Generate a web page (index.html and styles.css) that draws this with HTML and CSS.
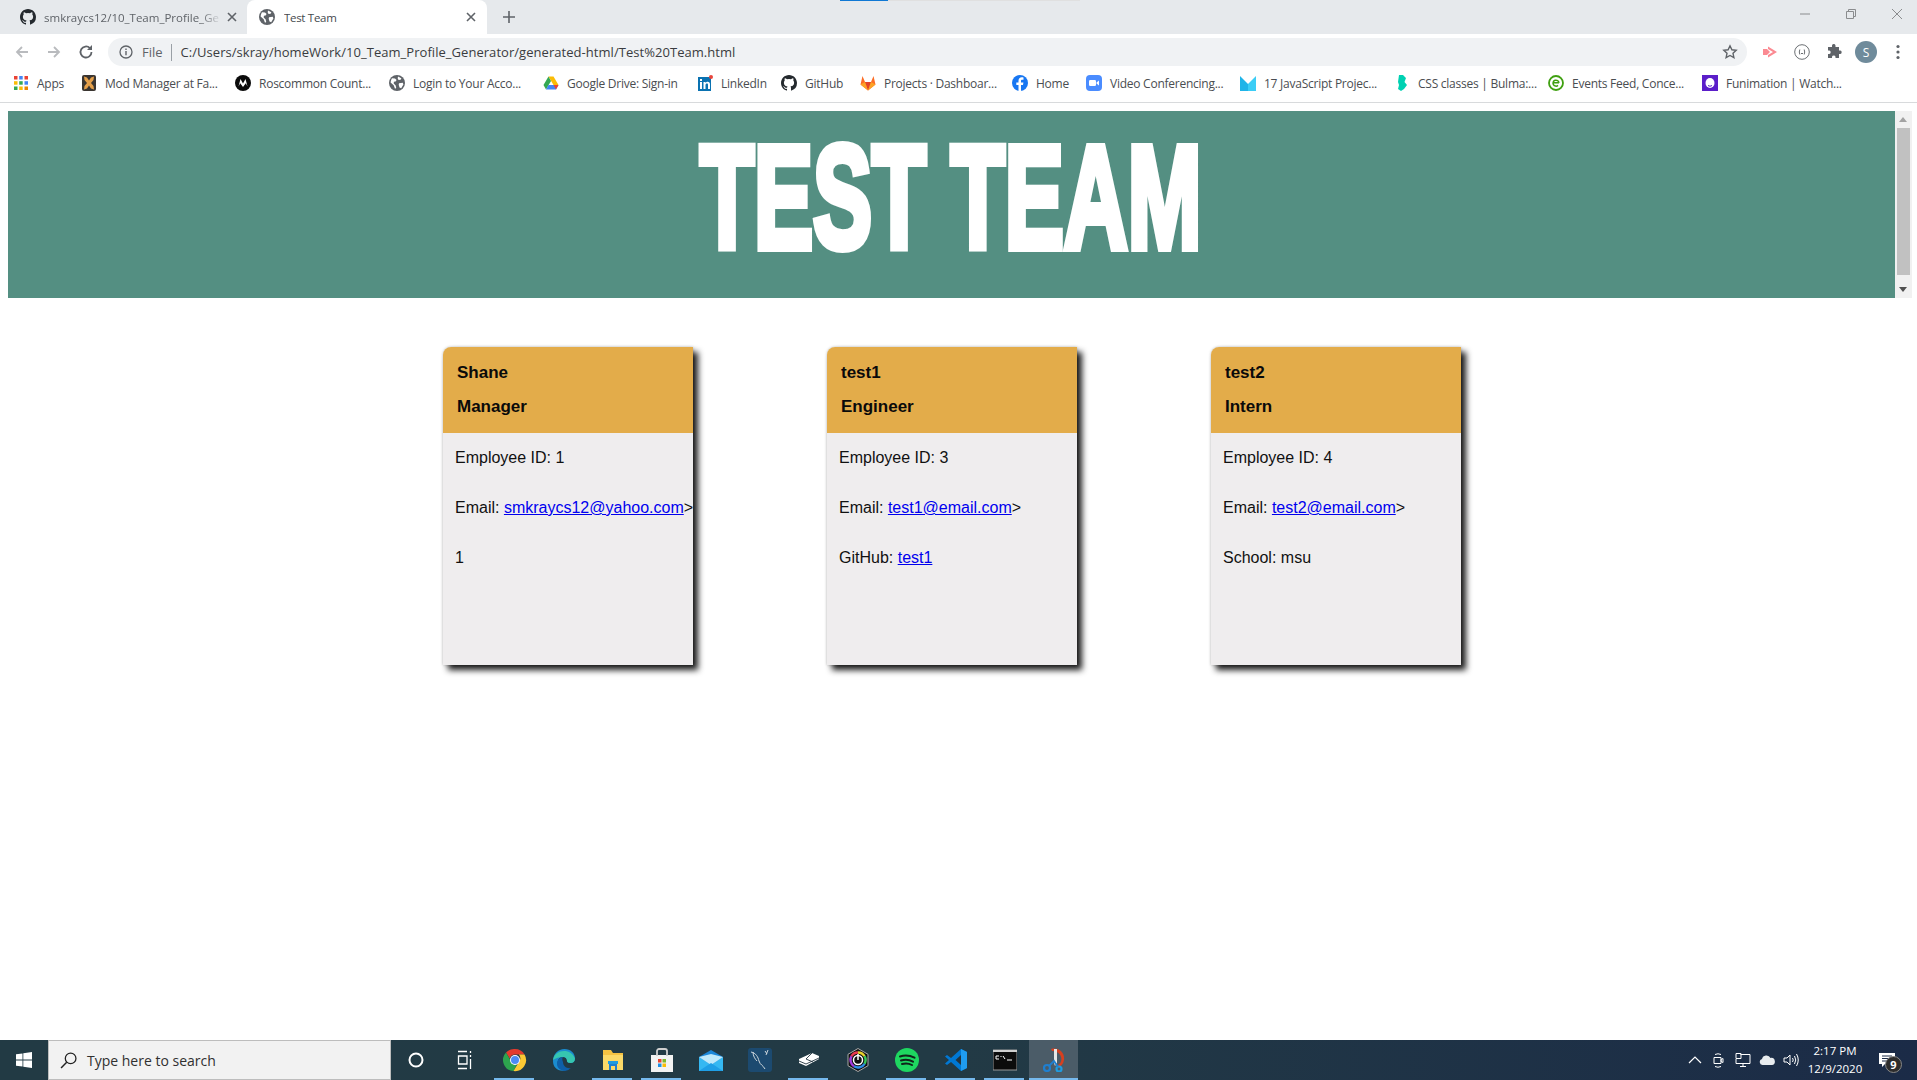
FILE: index.html
```html
<!DOCTYPE html>
<html lang="en">
<head>
<meta charset="utf-8">
<title>Test Team</title>
<link rel="stylesheet" href="styles.css">
</head>
<body>
<div class="window">
  <div class="tabstrip">
    <div class="tab tab-inactive">
      <svg class="ico16" viewBox="0 0 16 16"><path fill="#24292e" d="M8 0C3.58 0 0 3.58 0 8c0 3.54 2.29 6.53 5.47 7.59.4.07.55-.17.55-.38v-1.34c-2.23.48-2.7-1.07-2.7-1.07-.36-.92-.89-1.17-.89-1.17-.73-.5.05-.49.05-.49.8.06 1.23.83 1.23.83.71 1.22 1.87.87 2.33.66.07-.52.28-.87.51-1.07-1.78-.2-3.64-.89-3.64-3.95 0-.87.31-1.59.82-2.15-.08-.2-.36-1.02.08-2.12 0 0 .67-.21 2.2.82a7.6 7.6 0 0 1 4 0c1.53-1.04 2.2-.82 2.2-.82.44 1.1.16 1.92.08 2.12.51.56.82 1.27.82 2.15 0 3.07-1.87 3.75-3.65 3.95.29.25.54.73.54 1.48v2.2c0 .21.15.46.55.38A8 8 0 0 0 16 8c0-4.42-3.58-8-8-8z"/></svg>
      <span class="tab-title tab-title-fade">smkraycs12/10_Team_Profile_Ge</span>
      <svg class="tab-x" viewBox="0 0 10 10"><path d="M1 1l8 8M9 1l-8 8" stroke="#5f6368" stroke-width="1.6"/></svg>
    </div>
    <div class="tab tab-active">
      <svg class="ico16" viewBox="0 0 16 16"><circle cx="8" cy="8" r="8" fill="#5f6368"/><path fill="#fff" d="M3 3.200l3 .3 1.600 1.600-1 1.500-1.700.2-.2 1.600 2 2 .5 2.500-1.200.8-1.300-3.500L1.600 7.600C1.800 5.900 2.200 4.300 3 3.200zM9 1.600l3.400 1.600-.8 1.600-2 .2-.9-1.500zM10 8.200l3.800-.4.6 1.800-2.200 3.600-1.700-.6-.8-2.800z"/></svg>
      <span class="tab-title">Test Team</span>
      <svg class="tab-x" viewBox="0 0 10 10"><path d="M1 1l8 8M9 1l-8 8" stroke="#5f6368" stroke-width="1.6"/></svg>
    </div>
    <svg class="new-tab" viewBox="0 0 12 12"><path d="M6 0v12M0 6h12" stroke="#5f6368" stroke-width="1.6"/></svg>
    <div class="strip-fill"><div class="strip-blue"></div><div class="strip-grey"></div></div>
    <div class="winctl">
      <svg class="winbtn" viewBox="0 0 12 12"><path d="M1 6h10" stroke="#8a8c8e"/></svg>
      <svg class="winbtn" viewBox="0 0 12 12"><path d="M1.500 3.500h7v7h-7zM3.500 3.500v-2h7v7h-2" fill="none" stroke="#8a8c8e"/></svg>
      <svg class="winbtn" viewBox="0 0 12 12"><path d="M1 1l10 10M11 1L1 11" stroke="#8a8c8e"/></svg>
    </div>
  </div>

  <div class="toolbar">
    <svg class="nav" viewBox="0 0 16 16"><path d="M14 8H3M8 3L3 8l5 5" fill="none" stroke="#b9bbbe" stroke-width="1.800"/></svg>
    <svg class="nav" viewBox="0 0 16 16"><path d="M2 8h11M8 3l5 5-5 5" fill="none" stroke="#b9bbbe" stroke-width="1.800"/></svg>
    <svg class="nav" viewBox="0 0 16 16"><path d="M13.500 8a5.500 5.500 0 1 1-1.600-3.900" fill="none" stroke="#5f6368" stroke-width="1.800"/><path d="M14 1v5H9z" fill="#5f6368"/></svg>
    <div class="omnibox">
      <svg class="ico14" viewBox="0 0 14 14"><circle cx="7" cy="7" r="6" fill="none" stroke="#5f6368" stroke-width="1.300"/><path d="M7 6v4.200M7 3.500v1.400" stroke="#5f6368" stroke-width="1.400"/></svg>
      <span class="scheme">File</span>
      <span class="omni-sep"></span>
      <span class="url">C:/Users/skray/homeWork/10_Team_Profile_Generator/generated-html/Test%20Team.html</span>
      <svg class="star" viewBox="0 0 16 16"><path d="M8 1.800l1.900 4 4.300.5-3.200 3 .9 4.300L8 11.500l-3.900 2.100.9-4.300-3.200-3 4.300-.5z" fill="none" stroke="#5f6368" stroke-width="1.400"/></svg>
    </div>
    <div class="tools">
      <svg class="tool" viewBox="0 0 16 16"><path d="M1 5h4v6H1z" fill="#fb8a92"/><path d="M6 2.500L15 8l-9 5.500V11l5-3-5-3z" fill="#fb8a92"/><path d="M5 5l3 3-3 3z" fill="#fb8a92"/></svg>
      <svg class="tool" viewBox="0 0 16 16"><circle cx="8" cy="8" r="7.300" fill="none" stroke="#6b6f73"/><path d="M5.800 5.500Q4.800 8 5.800 10.500M10.200 5.500q1 2.500 0 5M7 9.500h2" fill="none" stroke="#6b6f73"/></svg>
      <svg class="tool" viewBox="0 0 16 16"><path fill="#5f6368" d="M6 1.500a1.800 1.800 0 0 1 3.500 0V3h3.500v3.500h1.300a1.800 1.800 0 0 1 0 3.500H13v4H9.500v-1.200a1.800 1.800 0 0 0-3.500 0V14H2v-4h1.300a1.800 1.800 0 0 0 0-3.500H2V3h4z"/></svg>
      <span class="avatar">S</span>
      <svg class="tool" viewBox="0 0 16 16"><circle cx="8" cy="2.500" r="1.600" fill="#5f6368"/><circle cx="8" cy="8" r="1.600" fill="#5f6368"/><circle cx="8" cy="13.500" r="1.600" fill="#5f6368"/></svg>
    </div>
  </div>

  <div class="bookmarks">
    <div class="bm bm-apps">
      <svg class="ico16" viewBox="0 0 16 16"><g><rect x="1" y="1" width="3.500" height="3.500" fill="#ea4335"/><rect x="6.200" y="1" width="3.500" height="3.500" fill="#4285f4"/><rect x="11.500" y="1" width="3.500" height="3.500" fill="#ea4335"/><rect x="1" y="6.200" width="3.500" height="3.500" fill="#fbbc05"/><rect x="6.200" y="6.200" width="3.500" height="3.500" fill="#34a853"/><rect x="11.500" y="6.200" width="3.500" height="3.500" fill="#4285f4"/><rect x="1" y="11.500" width="3.500" height="3.500" fill="#34a853"/><rect x="6.200" y="11.500" width="3.500" height="3.500" fill="#fbbc05"/><rect x="11.500" y="11.500" width="3.500" height="3.500" fill="#ea8600"/></g></svg>
      <span class="bm-text">Apps</span>
    </div>
    <div class="bm">
      <svg class="ico16" viewBox="0 0 16 16"><rect x="1" y="0" width="14" height="16" rx="2" fill="#3a3531"/><path d="M3 1.500L6 2.500 8 5.500l2-3 3-1-.5 3.500L10 8l2.500 3 .5 3.500-3-1-2-3-2 3-3 1 .500-3.500L6 8 3.500 5z" fill="#e5a04a"/></svg>
      <span class="bm-text">Mod Manager at Fa...</span>
    </div>
    <div class="bm">
      <svg class="ico16" viewBox="0 0 16 16"><circle cx="8" cy="8" r="8" fill="#0b0b0b"/><path d="M3.500 11.500L5.500 4 8 8.500 10.500 4l2 7.500-1.700-3.200L8 12 5.200 8.300z" fill="#fff"/></svg>
      <span class="bm-text">Roscommon Count...</span>
    </div>
    <div class="bm">
      <svg class="ico16" viewBox="0 0 16 16"><circle cx="8" cy="8" r="8" fill="#5f6368"/><path fill="#fff" d="M3 3.200l3 .3 1.600 1.600-1 1.500-1.700.2-.2 1.600 2 2 .5 2.500-1.200.8-1.300-3.500L1.600 7.600C1.800 5.900 2.200 4.300 3 3.200zM9 1.600l3.400 1.600-.8 1.600-2 .2-.9-1.500zM10 8.200l3.800-.4.6 1.800-2.200 3.600-1.700-.6-.8-2.800z"/></svg>
      <span class="bm-text">Login to Your Acco...</span>
    </div>
    <div class="bm">
      <svg class="ico16" viewBox="0 0 16 16"><path d="M5.500 1.500h5L15.500 10H10.500z" fill="#fbbc05"/><path d="M5.500 1.500L.5 10l2.500 4.500L8 6z" fill="#34a853"/><path d="M3 14.500h10l2.500-4.500H5.500z" fill="#4285f4"/><path d="M13 14.500l2.500-4.500h-5z" fill="#ea4335"/></svg>
      <span class="bm-text">Google Drive: Sign-in</span>
    </div>
    <div class="bm bm-linkedin">
      <svg class="ico16" viewBox="0 0 16 16"><rect x="1" y="2" width="13" height="14" fill="#0a72b1"/><circle cx="14" cy="2" r="2" fill="#e8453c"/><path d="M3 7h2v7H3zM3 4h2v2H3zM6.500 7h2v1c.6-.9 1.400-1.200 2.200-1.200 1.500 0 2.300 1 2.300 2.700V14h-2v-4c0-.9-.3-1.400-1.100-1.400-.8 0-1.400.6-1.400 1.500V14h-2z" fill="#fff"/></svg>
      <span class="bm-text">LinkedIn</span>
    </div>
    <div class="bm bm-github">
      <svg class="ico16" viewBox="0 0 16 16"><path fill="#24292e" d="M8 0C3.580 0 0 3.580 0 8c0 3.540 2.290 6.530 5.470 7.590.4.070.55-.17.55-.38v-1.340c-2.230.48-2.700-1.070-2.700-1.070-.36-.92-.89-1.170-.89-1.170-.73-.5.050-.49.050-.49.800.060 1.230.830 1.230.830.710 1.220 1.870.870 2.330.660.070-.52.280-.87.510-1.070-1.780-.2-3.640-.89-3.640-3.950 0-.87.310-1.590.820-2.150-.08-.2-.36-1.020.080-2.120 0 0 .670-.21 2.200.820a7.600 7.600 0 0 1 4 0c1.530-1.040 2.200-.82 2.200-.82.440 1.100.160 1.920.080 2.120.510.560.820 1.270.820 2.150 0 3.070-1.870 3.750-3.650 3.950.290.250.540.730.540 1.480v2.200c0 .21.150.46.55.38A8 8 0 0 0 16 8c0-4.420-3.580-8-8-8z"/></svg>
      <span class="bm-text">GitHub</span>
    </div>
    <div class="bm bm-gitlab">
      <svg class="ico16" viewBox="0 0 16 16"><path d="M8 15.500L.5 9.500 2.500 1l2.500 6h6l2.500-6 2 8.500z" fill="#fc6d26"/><path d="M8 15.500L5 7h6z" fill="#e24329"/><path d="M8 15.500L.5 9.500 5 7zM8 15.500l7.500-6L11 7z" fill="#fca326"/></svg>
      <span class="bm-text">Projects · Dashboar...</span>
    </div>
    <div class="bm bm-home">
      <svg class="ico16" viewBox="0 0 16 16"><circle cx="8" cy="8" r="8" fill="#1877f2"/><path d="M9 16V10h2l.4-2.500H9V6c0-.8.3-1.300 1.400-1.300h1.100V2.500C11.200 2.400 10.500 2.300 9.800 2.300 7.800 2.300 6.500 3.500 6.500 5.700v1.800H4.300V10h2.200v6z" fill="#fff"/></svg>
      <span class="bm-text">Home</span>
    </div>
    <div class="bm">
      <svg class="ico16" viewBox="0 0 16 16"><rect width="16" height="16" rx="4" fill="#4a8cff"/><rect x="3" y="5" width="7" height="6" rx="1.200" fill="#fff"/><path d="M10.500 7.500L13 5.500v5l-2.500-2z" fill="#fff"/></svg>
      <span class="bm-text">Video Conferencing...</span>
    </div>
    <div class="bm">
      <svg class="ico16" viewBox="0 0 16 16"><path d="M0 1l8 8v7H0z" fill="#1fb4e8"/><path d="M16 1L8 9v7h8z" fill="#3bcdf6"/></svg>
      <span class="bm-text">17 JavaScript Projec...</span>
    </div>
    <div class="bm">
      <svg class="ico16" viewBox="0 0 16 16"><path d="M5 0h4l3 3-1.500 4L13 10l-3 4-3 2-3-2 1-4-1-3z" fill="#00d1b2"/></svg>
      <span class="bm-text">CSS classes | Bulma:...</span>
    </div>
    <div class="bm">
      <svg class="ico16" viewBox="0 0 16 16"><circle cx="8" cy="8" r="7" fill="#fff" stroke="#3fa010" stroke-width="1.800"/><path d="M5 7.800h6M11 7.800a3 3 0 1 0-1 2.600" fill="none" stroke="#3fa010" stroke-width="1.500"/></svg>
      <span class="bm-text">Events Feed, Conce...</span>
    </div>
    <div class="bm">
      <svg class="ico16" viewBox="0 0 16 16"><rect width="16" height="16" fill="#5b1ec9"/><ellipse cx="8" cy="8" rx="4.500" ry="5" fill="#fff"/><path d="M6 10.500q2 1.500 4 0" stroke="#5b1ec9" fill="none"/></svg>
      <span class="bm-text">Funimation | Watch...</span>
    </div>
  </div>

  <main class="page">
    <div class="banner-row">
      <header class="banner"><h1 class="banner-title">TEST TEAM</h1></header>
      <div class="scrollbar">
        <span class="sb-up"></span>
        <span class="sb-thumb"></span>
        <span class="sb-down"></span>
      </div>
    </div>
    <section class="cards">
      <article class="card">
        <div class="card-head"><h2>Shane</h2><h2>Manager</h2></div>
        <div class="card-body">
          <p>Employee ID: 1</p>
          <p>Email: <a href="#">smkraycs12@yahoo.com</a>&gt;</p>
          <p>1</p>
        </div>
      </article>
      <article class="card">
        <div class="card-head"><h2>test1</h2><h2>Engineer</h2></div>
        <div class="card-body">
          <p>Employee ID: 3</p>
          <p>Email: <a href="#">test1@email.com</a>&gt;</p>
          <p>GitHub: <a href="#">test1</a></p>
        </div>
      </article>
      <article class="card">
        <div class="card-head"><h2>test2</h2><h2>Intern</h2></div>
        <div class="card-body">
          <p>Employee ID: 4</p>
          <p>Email: <a href="#">test2@email.com</a>&gt;</p>
          <p>School: msu</p>
        </div>
      </article>
    </section>
  </main>

  <footer class="taskbar">
    <div class="start">
      <svg class="start-ico" viewBox="0 0 16 16"><path fill="#fff" d="M0 2.300L6.500 1.400v6.200H0zM7.300 1.300L16 0v7.600H7.300zM0 8.400h6.500v6.200L0 13.700zM7.300 8.400H16V16l-8.700-1.200z"/></svg>
    </div>
    <div class="search">
      <svg class="search-ico" viewBox="0 0 16 16"><circle cx="10" cy="6" r="5" fill="none" stroke="#222" stroke-width="1.200"/><path d="M6.300 9.700L1 15" stroke="#222" stroke-width="1.400"/></svg>
      <span>Type here to search</span>
    </div>
    <div class="task"><svg class="t20" viewBox="0 0 20 20"><circle cx="10" cy="10" r="6.500" fill="none" stroke="#fff" stroke-width="2"/></svg></div>
    <div class="task task-view"><svg class="t20" viewBox="0 0 20 20"><path d="M3 1.500h9M3 18.500h9M15.500 1v2M15.500 5v2M15.500 9v10M3.500 6h8.500v8H3.500z" fill="none" stroke="#fff" stroke-width="1.300"/></svg></div>
    <div class="task task-on task-split">
      <svg class="t24" viewBox="0 0 24 24"><path d="M12 1a11 11 0 0 1 9.500 5.500H12a5.500 5.500 0 0 0-5.300 4L3 4.500A11 11 0 0 1 12 1z" fill="#e33b2e"/><path d="M3 4.500l5 8.700a5.500 5.500 0 0 0 6 2.900L10.500 23A11 11 0 0 1 3 4.500z" fill="#2da44e"/><path d="M21.500 6.500A11 11 0 0 1 10.500 23l5-8.500a5.500 5.500 0 0 0 .3-8z" fill="#fcc934"/><circle cx="12" cy="12" r="5" fill="#fff"/><circle cx="12" cy="12" r="4" fill="#4c8bf5"/></svg>
    </div>
    <div class="task">
      <svg class="t24" viewBox="0 0 24 24"><path d="M1 13C1 6 6 1 12.500 1 18.500 1 23 5 23 10.500c0 3-2 4.500-4.500 4.500-2 0-3.500-.8-3.500-2 0-2-1-4-4-4-4 0-6 3.500-5 7 .6 2 2.500 5 7 6.500C5 23.500 1 19 1 13z" fill="#1b8ccf"/><path d="M1 12C2 6 7 3 12 3c5 0 9 2.500 11 7.500 0 3-2 4.500-4.500 4.500-2 0-3.500-.8-3.500-2 0-2-1-4-4-4C7 9 4 10 1 12z" fill="#36c6b0"/><path d="M11 14c0 4 4 7 8 6a11 11 0 0 1-6 3c-4 0-8-3-8-7 0-4 3-7 6-7-1 1-1 3 0 5z" fill="#0f5fa8"/></svg>
    </div>
    <div class="task task-on">
      <svg class="t24" viewBox="0 0 24 24"><path d="M2 2h8l2 3h10v17H2z" fill="#f5c242"/><path d="M2 7h20v15H2z" fill="#fbd968"/><path d="M8 15h8v7h-2v-4h-4v4H8z" fill="#1f7fd0"/><path d="M7 13h10v3H7z" fill="#1f9be0"/></svg>
    </div>
    <div class="task task-on">
      <svg class="t24" viewBox="0 0 24 24"><path d="M1 7h22v17H1z" fill="#f3f3f3"/><path d="M7 8V3a2 2 0 0 1 2-2h6a2 2 0 0 1 2 2v5" fill="none" stroke="#cfcfcf" stroke-width="1.800"/><rect x="8" y="11" width="3.500" height="3.500" fill="#e8432e"/><rect x="12.500" y="11" width="3.500" height="3.500" fill="#7cb82f"/><rect x="8" y="15.500" width="3.500" height="3.500" fill="#1e90e6"/><rect x="12.500" y="15.500" width="3.500" height="3.500" fill="#fbbc05"/></svg>
    </div>
    <div class="task">
      <svg class="t24" viewBox="0 0 24 24"><path d="M0 9l12-7 12 7v14H0z" fill="#1b87d9"/><path d="M0 9l12 8 12-8v14H0z" fill="#35b8f2"/><path d="M0 9l12 8 12-8-12-3z" fill="#bfe9fb"/><path d="M0 23l12-8 12 8z" fill="#1f9fe6"/></svg>
    </div>
    <div class="task">
      <svg class="t24" viewBox="0 0 24 24"><rect width="24" height="24" rx="3" fill="#1c4a70"/><path d="M3 4c5 1 7 5 8 9s4 4 6 8M5 4c0 4 2 7 4 9M17 3l2 3M20 2l-2 5" fill="none" stroke="#cfd8de" stroke-width="1"/></svg>
    </div>
    <div class="task task-on">
      <svg class="t24" viewBox="0 0 24 24"><path d="M2 11l13-6 7 3v3L9 18l-7-3z" fill="#fff"/><path d="M2 13l7 3 13-6M15 5l-6 6 7 3" fill="none" stroke="#22343f" stroke-width=".9"/></svg>
    </div>
    <div class="task">
      <svg class="t24" viewBox="0 0 24 24"><path d="M12 .5l10 5.800v11.400l-10 5.800-10-5.800V6.300z" fill="#111" stroke="#aaa"/><path d="M12 4.500a7.500 7.500 0 0 1 6.500 3.700" fill="none" stroke="#e8d22c" stroke-width="2.400"/><path d="M18.500 8.200a7.500 7.500 0 0 1 0 7.600" fill="none" stroke="#37c75a" stroke-width="2.400"/><path d="M18.500 15.800A7.500 7.500 0 0 1 8 18.300" fill="none" stroke="#2f8fe8" stroke-width="2.400"/><path d="M8 18.300A7.500 7.500 0 0 1 5.500 8.200" fill="none" stroke="#a53ce0" stroke-width="2.400"/><path d="M5.500 8.200A7.500 7.500 0 0 1 12 4.500" fill="none" stroke="#e8384f" stroke-width="2.400"/><circle cx="12" cy="12" r="4.500" fill="none" stroke="#fff" stroke-width="1.500"/><path d="M12 6v6" stroke="#fff" stroke-width="1.500"/></svg>
    </div>
    <div class="task task-on">
      <svg class="t24" viewBox="0 0 24 24"><circle cx="12" cy="12" r="12" fill="#1ed760"/><path d="M5 8.500c5-1.500 10-1 14.500 1.200M6 12.500c4-1.200 8.500-.8 12 1.200M7 16c3.500-1 7-.7 10 1" fill="none" stroke="#10241a" stroke-width="2" stroke-linecap="round"/></svg>
    </div>
    <div class="task task-on task-split">
      <svg class="t24" viewBox="0 0 24 24"><path d="M17 1l6 3v16l-6 3L7 14l-4 3-2-1.500L5 12 1 8.500 3 7l4 3z" fill="#0078d4"/><path d="M17 1l6 3v16l-6 3z" fill="#1f9cf0"/><path d="M17 7l-5.500 5 5.500 5z" fill="#22343f"/></svg>
    </div>
    <div class="task task-on">
      <svg class="t24" viewBox="0 0 24 24"><rect x="0" y="2" width="24" height="20" fill="#0c0c0c" stroke="#9a9a9a"/><rect x="0" y="2" width="24" height="2" fill="#cfcfcf"/><path d="M3 8h3M3 8v3h3M8 8v1M8 11v0M10 8l2 3M14 12h5" stroke="#fff" fill="none"/></svg>
    </div>
    <div class="task task-on task-active">
      <svg class="t24" viewBox="0 0 24 24"><path d="M9 1c7-2 14 3 13 11-.6 4-3 6-5 7l-1-2c3-2 4-5 3-8-1-4-5-6-9-6z" fill="#d6401f"/><path d="M12 1h3v14l-2 3-1-3z" fill="#e8e8e8"/><circle cx="5" cy="20" r="3" fill="none" stroke="#1f7fd0" stroke-width="2.200"/><circle cx="17" cy="21" r="2.500" fill="none" stroke="#1f9be0" stroke-width="2.200"/><path d="M7 18l5-5 4 6" fill="none" stroke="#1f7fd0" stroke-width="1.800"/></svg>
    </div>
    <div class="tray">
      <svg class="tray-ico" viewBox="0 0 16 16"><path d="M2 11l6-6 6 6" fill="none" stroke="#fff" stroke-width="1.200"/></svg>
      <svg class="tray-ico" viewBox="0 0 16 16"><path d="M3 5.500h7v6H3zM10 7.500l2-1v4l-2-1zM4 2.500q3-1.500 6 0M4 14.500q3 1.500 6 0" fill="none" stroke="#fff"/></svg>
      <svg class="tray-ico" viewBox="0 0 16 16"><path d="M5.500 2.500H15v9H1V7M8 11.500v3M5 14.500h6M1 1.500h5v5H1z" fill="none" stroke="#fff"/></svg>
      <svg class="tray-ico" viewBox="0 0 16 16"><path d="M3.500 13a3 3 0 0 1-.5-5.900A4.500 4.500 0 0 1 11.500 6 3.500 3.500 0 0 1 13 13z" fill="#e8ecef"/></svg>
      <svg class="tray-ico" viewBox="0 0 16 16"><path d="M1 6h3l3-3v10l-3-3H1zM9.500 6q1.500 2 0 4M11.500 4q2.500 4 0 8M13.500 2q3.500 6 0 12" fill="none" stroke="#fff"/></svg>
      <div class="clock"><span>2:17 PM</span><span>12/9/2020</span></div>
      <div class="notif">
        <svg class="notif-ico" viewBox="0 0 16 16"><path d="M0 1h16v11H6l-3 3v-3H0z" fill="#fff"/><path d="M3 4h10M3 6.500h10M3 9h6" stroke="#1b2b47"/></svg>
        <span class="notif-badge">9</span>
      </div>
    </div>
  </footer>
</div>
</body>
</html>
```

FILE: styles.css
```css
* { box-sizing: border-box; }
html, body { margin: 0; padding: 0; height: 100%; overflow: hidden; background: #fff; }
.window { width: 1917px; height: 1080px; display: flex; flex-direction: column; font-family: "Open Sans", "Noto Sans", sans-serif; }

.tabstrip { height: 34px; background: #e6e9ec; display: flex; align-items: stretch; flex: none; }
.tab { display: flex; align-items: center; font-size: 11.5px; color: #5f6368; position: relative; }
.tab-inactive { width: 247px; padding-left: 20px; }
.tab-active { width: 240px; padding-left: 12px; background: #fff; border-radius: 8px 8px 0 0; color: #45494d; }
.tab-active .tab-title { letter-spacing: -.3px; }
.ico16 { width: 16px; height: 16px; flex: none; }
.tab-title { margin-left: 9px; white-space: nowrap; overflow: hidden; flex: 1; min-width: 0; }
.tab-inactive .tab-title { margin: 0 5px 0 8px; }
.tab-title-fade { -webkit-mask-image: linear-gradient(90deg, #000 88%, transparent); mask-image: linear-gradient(90deg, #000 88%, transparent); }
.tab-x { width: 10px; height: 10px; margin-right: 11px; flex: none; }
.tab-inactive .tab-x { margin-right: 10px; }
.new-tab { width: 12px; height: 12px; margin: 11px 0 0 16px; flex: none; }
.strip-fill { flex: 1; display: flex; align-items: flex-start; margin-left: 325px; }
.strip-blue { width: 48px; height: 1px; background: #0f78d4; }
.strip-grey { width: 192px; height: 1px; background: #e0e0e0; }
.winctl { display: flex; gap: 34px; padding: 8px 14px 0 0; align-items: flex-start; }
.winbtn { width: 12px; height: 12px; }

.toolbar { height: 32px; background: #fff; display: flex; align-items: center; padding: 4px 0 0 14px; flex: none; }
.nav { width: 16px; height: 16px; margin-right: 16px; flex: none; }
.omnibox { width: 1639px; height: 28px; margin-left: -2px; border-radius: 14px; background: #f0f2f4; display: flex; align-items: center; padding: 0 9px 0 11px; color: #202124; flex: none; }
.ico14 { width: 14px; height: 14px; flex: none; }
.scheme { margin-left: 9px; color: #5f6368; font-size: 13px; }
.omni-sep { width: 1px; height: 17px; background: #9aa0a6; margin: 0 9px 0 8px; }
.url { flex: 1; white-space: nowrap; color: #3a3c40; font-size: 13px; letter-spacing: .045px; }
.star { width: 16px; height: 16px; flex: none; }
.tools { display: flex; align-items: center; margin-left: 15px; gap: 16px; }
.tool { width: 16px; height: 16px; flex: none; }
.avatar { width: 22px; height: 22px; margin: 0 -3px; border-radius: 50%; background: #6f8b9b; color: #fff; font-size: 12px; display: flex; align-items: center; justify-content: center; flex: none; }

.bookmarks { height: 37px; background: #fff; border-bottom: 1px solid #d8dadc; display: flex; align-items: center; padding: 0 0 2px 13px; flex: none; }
.bm { width: 154px; display: flex; align-items: center; gap: 8px; flex: none; }
.bm-apps { width: 68px; }
.bm-linkedin { width: 84px; }
.bm-github { width: 79px; }
.bm-gitlab { width: 152px; }
.bm-home { width: 74px; }
.bm-text { font-size: 12px; color: #4a4d51; white-space: nowrap; letter-spacing: -.25px; }

.page { flex: 1; min-height: 0; padding: 8px 5px 0 8px; font-family: "Liberation Sans", Arial, sans-serif; }
.banner-row { display: flex; height: 187px; }
.banner { flex: 1; background: #548f82; display: flex; justify-content: center; }
.banner-title { margin: 30px 0 0 -1px; width: 503px; height: 113px; font-family: "Liberation Sans", Arial, sans-serif; font-weight: 700; font-size: 146px; line-height: 113px; color: #fff; white-space: nowrap; letter-spacing: 0; -webkit-text-stroke: 8px #fff; transform: scaleX(.606); transform-origin: 0 50%; }
.scrollbar { width: 17px; background: #f1f1f1; display: flex; flex-direction: column; align-items: center; }
.sb-up, .sb-down { height: 17px; width: 17px; flex: none; position: relative; }
.sb-up::after, .sb-down::after { content: ""; position: absolute; left: 4px; top: 6px; border: 4px solid transparent; }
.sb-up::after { border-bottom: 5px solid #a3a3a3; border-top: 0; }
.sb-down::after { border-top: 5px solid #505050; border-bottom: 0; }
.sb-thumb { width: 13px; height: 147px; background: #c1c1c1; }
.sb-down { margin-top: auto; }

.cards { display: flex; gap: 134px; padding: 49px 0 0 435px; }
.card { width: 250px; height: 318px; background: #efedee; border-radius: 8px 0 0 0; box-shadow: 5px 5px 6px rgba(0, 0, 0, .9), 0 0 3px rgba(0, 0, 0, .25); }
.card-head { height: 86px; background: #e3ac4a; border-radius: 8px 0 0 0; padding: 16px 14px 0; }
.card-head h2 { margin: 0 0 14px; font-size: 17px; line-height: 20px; font-weight: 700; color: #0a0a0a; }
.card-body { padding: 16px 0 0 12px; }
.card-body p { margin: 0 0 32px; font-size: 16px; line-height: 18px; color: #111; white-space: nowrap; }
.card-body a { color: #0000ee; }

.taskbar { height: 40px; flex: none; background: linear-gradient(90deg, #223a44, #223a45 50%, #1b2b47); display: flex; align-items: stretch; font-family: "Open Sans", "Noto Sans", sans-serif; }
.start { width: 48px; display: flex; align-items: center; justify-content: center; flex: none; }
.start-ico { width: 16px; height: 16px; }
.search { width: 343px; flex: none; background: #f2f2f2; border: 1px solid #bdbdbd; display: flex; align-items: center; padding-left: 11px; gap: 10px; font-size: 14px; color: #303030; }
.search-ico { width: 17px; height: 17px; }
.task { width: 49px; flex: none; display: flex; align-items: center; justify-content: center; position: relative; }
.task-view { margin-right: 1px; }
.t20 { width: 20px; height: 20px; }
.t24 { width: 24px; height: 24px; }
.task-on::after { content: ""; position: absolute; left: 4px; right: 5px; bottom: 0; height: 2px; background: #76b9ed; }
.task-active { background: #4b5c68; }
.task-active::after { left: 0; right: 0; }
.tray { flex: 1; display: flex; align-items: center; justify-content: flex-end; color: #fff; }
.tray-ico { width: 16px; height: 16px; margin-right: 8px; flex: none; }
.clock { display: flex; flex-direction: column; align-items: center; width: 60px; margin-left: -2px; font-size: 11.5px; line-height: 18px; }
.notif { width: 44px; height: 100%; position: relative; display: flex; align-items: center; justify-content: center; margin-right: 8px; }
.notif-ico { width: 16px; height: 16px; }
.notif-badge { position: absolute; left: 20px; top: 16px; width: 17px; height: 17px; border-radius: 50%; background: #2c2c2c; border: 1px solid #888; font-size: 11px; font-weight: 700; display: flex; align-items: center; justify-content: center; }
```
